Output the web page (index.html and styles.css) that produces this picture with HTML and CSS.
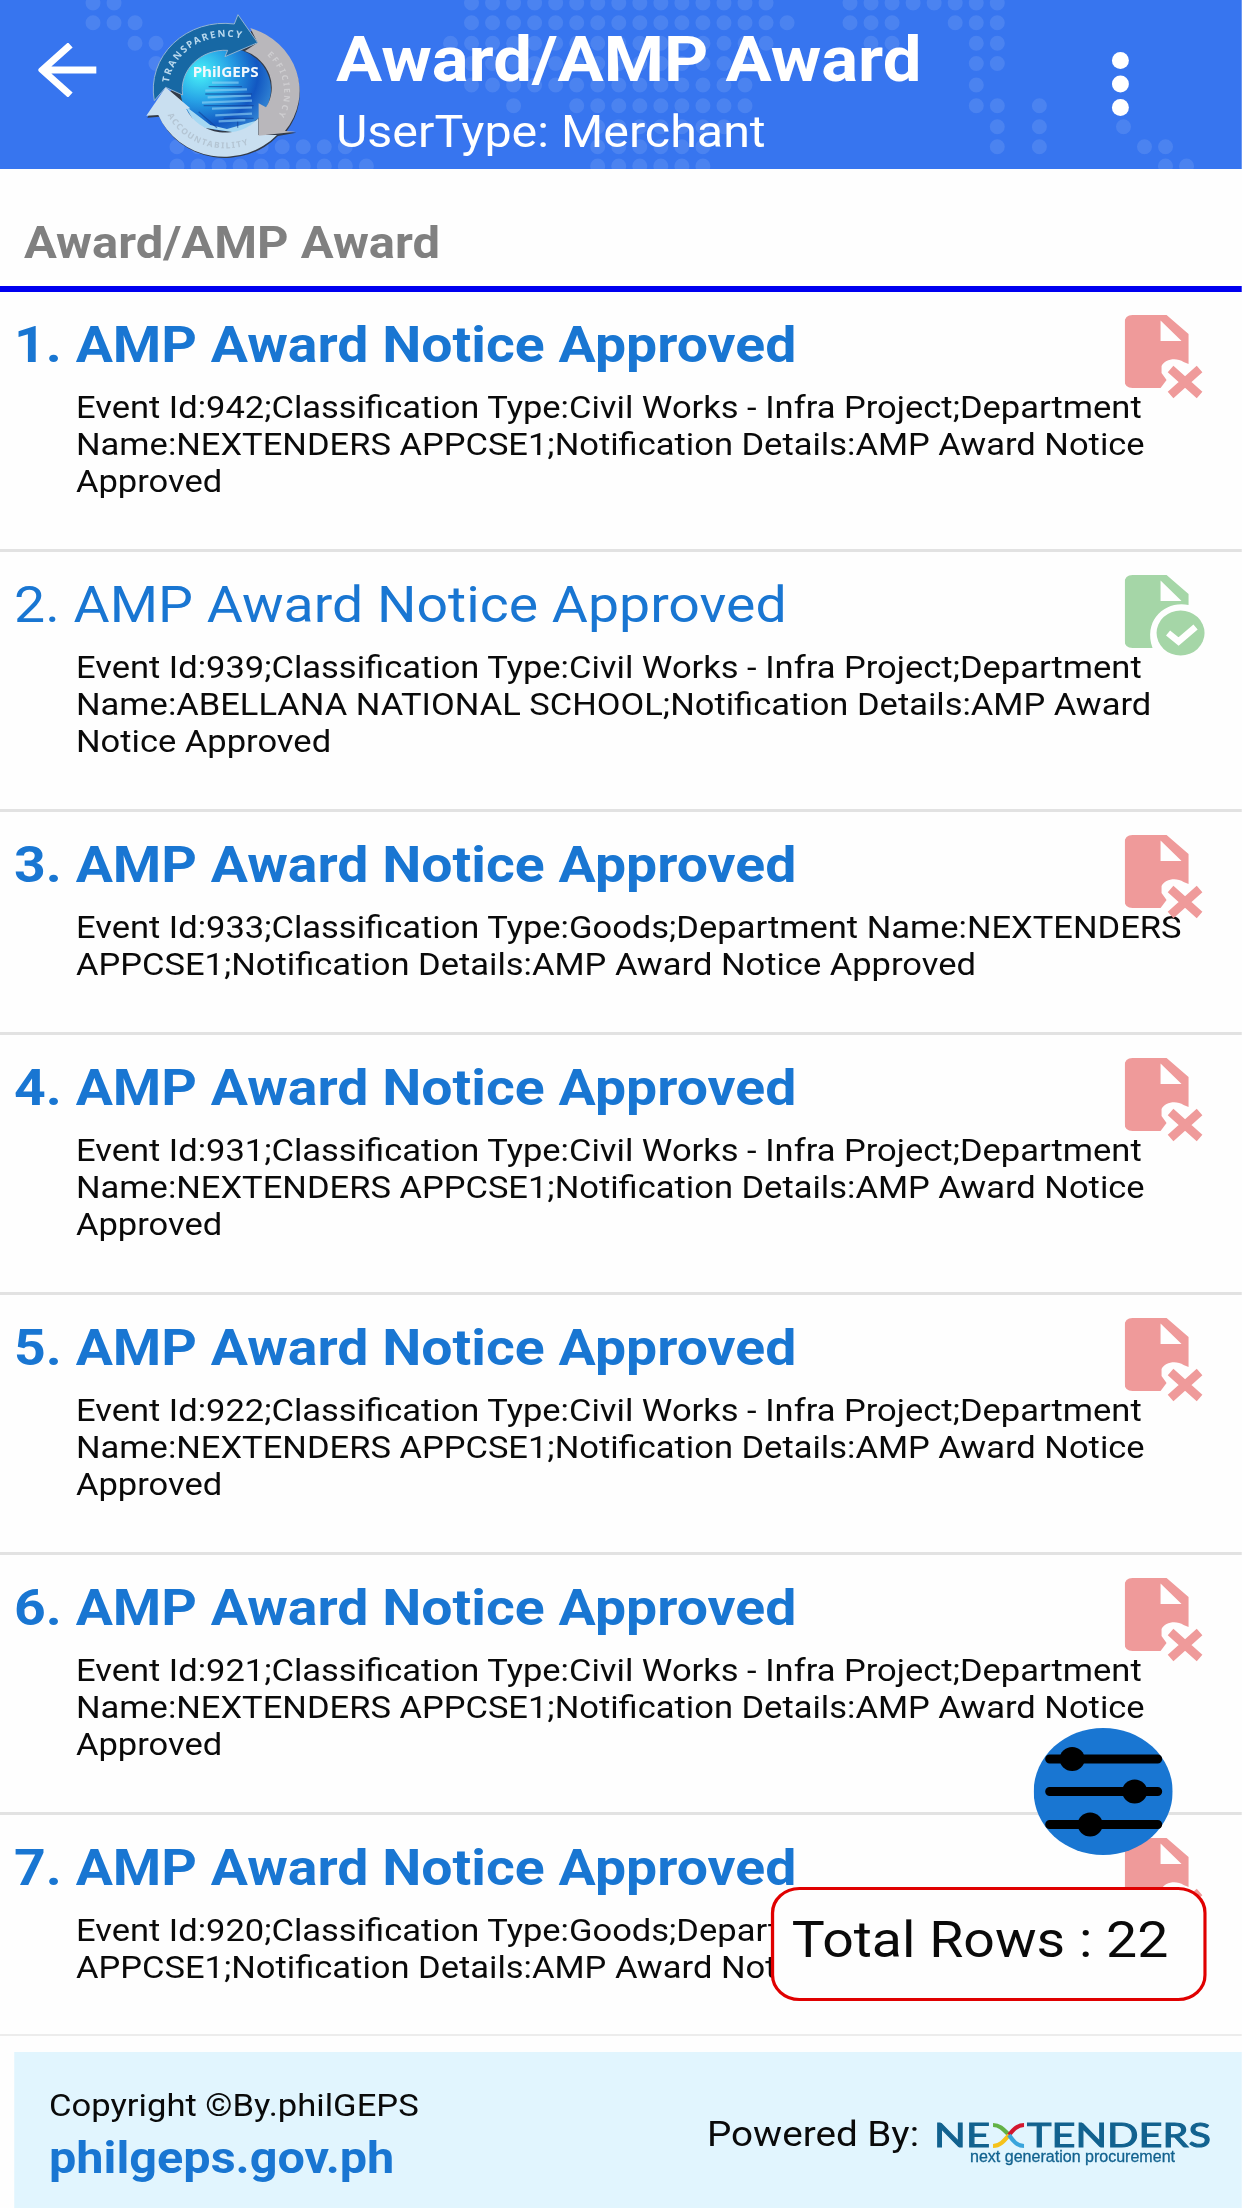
FILE: index.html
```html
<!DOCTYPE html>
<html lang="en">
<head>
<meta charset="utf-8">
<title>Award/AMP Award</title>
<link rel="stylesheet" href="styles.css">
</head>
<body>
<svg class="defs" aria-hidden="true">
  <symbol id="file-remove" viewBox="0 0 85 85" preserveAspectRatio="none">
    <path fill-rule="evenodd" fill="#ef9a9a" d="M8 1H42L64 20V50L59 48C52 43 40 45 37 52V59L42 66L36 74H8Q0 74 0 66V9Q0 1 8 1ZM36 6.500V27H57Z"/>
    <path stroke="#ef9a9a" stroke-width="8.500" d="M46 55L75 81M75 55L46 81"/>
  </symbol>
  <symbol id="file-check" viewBox="0 0 85 85" preserveAspectRatio="none">
    <path fill-rule="evenodd" fill="#a5d6a7" d="M8 1H42L64 20V31C42 26 18 45 28 74H8Q0 74 0 66V9Q0 1 8 1ZM36 6.500V27H57Z"/>
    <ellipse cx="56" cy="59" rx="24" ry="22.500" fill="#a5d6a7"/>
    <path fill="none" stroke="#fff" stroke-width="6.500" d="M43.500 59L54 67.500L71 53"/>
  </symbol>
</svg>
<div class="screen">
  <header class="topbar">
    <svg class="dots" viewBox="0 0 1242 169" preserveAspectRatio="none">
      <path d="M93 3h22M471.500 3h295M850 3h148M93 22.700h43M471.500 22.700h316M850 22.700h43M955.200 22.700h43M135 43.300h22M450.500 43.300h316M871 43.300h22M976.300 43.300h22M156 63.500h1M471.500 63.500h274M976.300 63.500h22M471.500 85h274M976.300 85h1M513.600 105.700h1M576.700 105.700h169M976.300 105.700h22M1039.400 105.700h1M597.700 126.700h127M997.300 126.700h1M1039.400 126.700h1M1123.500 126.700h1M177 146.700h170M597.700 146.700h106M997.300 146.700h1M1039.400 146.700h1M1144.500 146.700h22M177 166h191M597.700 166h106M1165.500 166h22"/>
    </svg>
    <svg class="back" viewBox="0 0 59 54" preserveAspectRatio="none"><path d="M58 27H5M32 2L4 27L32 52"/></svg>
    <svg class="seal" viewBox="0 0 570 507" preserveAspectRatio="none">
      <defs>
        <radialGradient id="globe" cx=".22" cy=".3" r=".85"><stop offset="0" stop-color="#48f2f8"/><stop offset=".4" stop-color="#27a2e6"/><stop offset=".75" stop-color="#1257c2"/><stop offset="1" stop-color="#3386d4"/></radialGradient>
        <path id="arc1" d="M116 248A174 156 0 0 1 360 124"/>
        <path id="arc2" d="M410 165A165 155 0 0 1 425 375"/>
        <path id="arc3" d="M112 345A190 172 0 0 0 380 422"/>
      </defs>
      <path fill="#333b48" d="M365 92A213 198 0 0 1 468 395L498 398L443 408A213 198 0 0 1 87 350L51 353L77 305Z"/>
      <ellipse cx="286" cy="268" rx="136" ry="125" fill="url(#globe)"/>
      <path d="M165 318L240 375L290 387L385 360L330 400L200 380Z" fill="#a5d8f3"/>
      <g fill="none" stroke="#93d4f5" stroke-width="7" opacity=".6">
        <path d="M245 248H325M225 272l125-4M232 292l130-6M215 308l150-6M245 326l120-4M255 346l110-5M265 364l80-4"/>
        <path stroke="#123f96" stroke-width="4" d="M235 260h100M225 282h140M220 317h150M205 335l55 48M280 355h90M322 365v18"/>
      </g>
      <text class="seal-name" x="187" y="230" textLength="198" lengthAdjust="spacingAndGlyphs">PhilGEPS</text>
      <path fill="#c9dff0" d="M106 262L180 325L168 327A128 118 0 0 0 384 355V405H440A213 198 0 0 1 84 345L48 347Z"/>
      <path fill="#b9b7bb" d="M360 84A213 198 0 0 1 464 393L495 395L385 407V310L407 322A128 118 0 0 0 344 153L382 128Z"/>
      <path fill="#1768a4" stroke="#93b5d2" stroke-width="3" d="M72 302A213 198 0 0 1 312 72L323 44L382 128L284 170L292 151A128 118 0 0 0 157 285L106 262Z"/>
      <text class="seal-ring"><textPath href="#arc1" textLength="285">TRANSPARENCY</textPath></text>
      <text class="seal-ring muted"><textPath href="#arc2" textLength="200">EFFICIENCY</textPath></text>
      <text class="seal-ring faint"><textPath href="#arc3" textLength="280">ACCOUNTABILITY</textPath></text>
    </svg>
    <div class="heading">
      <h1>Award/AMP Award</h1>
      <p>UserType: Merchant</p>
    </div>
    <svg class="more" viewBox="0 0 18 66" preserveAspectRatio="none"><circle cx="9" cy="9.500" r="8.500"/><circle cx="9" cy="33" r="8.500"/><circle cx="9" cy="56.500" r="8.500"/></svg>
  </header>

  <h2 class="section">Award/AMP Award</h2>

  <main class="list">
    <article class="row unread">
      <h3>1. AMP Award Notice Approved</h3>
      <p>Event Id:942;Classification Type:Civil Works - Infra Project;Department<br>Name:NEXTENDERS APPCSE1;Notification Details:AMP Award Notice<br>Approved</p>
      <svg class="status"><use href="#file-remove"/></svg>
    </article>
    <article class="row">
      <h3>2. AMP Award Notice Approved</h3>
      <p>Event Id:939;Classification Type:Civil Works - Infra Project;Department<br>Name:ABELLANA NATIONAL SCHOOL;Notification Details:AMP Award<br>Notice Approved</p>
      <svg class="status"><use href="#file-check"/></svg>
    </article>
    <article class="row unread">
      <h3>3. AMP Award Notice Approved</h3>
      <p>Event Id:933;Classification Type:Goods;Department Name:NEXTENDERS<br>APPCSE1;Notification Details:AMP Award Notice Approved</p>
      <svg class="status"><use href="#file-remove"/></svg>
    </article>
    <article class="row unread">
      <h3>4. AMP Award Notice Approved</h3>
      <p>Event Id:931;Classification Type:Civil Works - Infra Project;Department<br>Name:NEXTENDERS APPCSE1;Notification Details:AMP Award Notice<br>Approved</p>
      <svg class="status"><use href="#file-remove"/></svg>
    </article>
    <article class="row unread">
      <h3>5. AMP Award Notice Approved</h3>
      <p>Event Id:922;Classification Type:Civil Works - Infra Project;Department<br>Name:NEXTENDERS APPCSE1;Notification Details:AMP Award Notice<br>Approved</p>
      <svg class="status"><use href="#file-remove"/></svg>
    </article>
    <article class="row unread">
      <h3>6. AMP Award Notice Approved</h3>
      <p>Event Id:921;Classification Type:Civil Works - Infra Project;Department<br>Name:NEXTENDERS APPCSE1;Notification Details:AMP Award Notice<br>Approved</p>
      <svg class="status"><use href="#file-remove"/></svg>
    </article>
    <article class="row unread">
      <h3>7. AMP Award Notice Approved</h3>
      <p>Event Id:920;Classification Type:Goods;Department Name:NEXTENDERS<br>APPCSE1;Notification Details:AMP Award Notice Approved</p>
      <svg class="status"><use href="#file-remove"/></svg>
    </article>
  </main>

  <footer class="footer">
    <div class="copyright">
      <p>Copyright ©By.philGEPS</p>
      <a>philgeps.gov.ph</a>
    </div>
    <div class="powered">
      <span>Powered By:</span>
      <svg class="brand" viewBox="0 0 280 48" preserveAspectRatio="none">
        <text class="brand-name" x="0" y="26" textLength="56" lengthAdjust="spacingAndGlyphs">NE</text>
        <g fill="none" stroke-width="4.200">
          <path stroke="#62b246" d="M59 4C66 4 70 9 75 14"/>
          <path stroke="#d3172e" d="M90 4C83 4 79 9 75 14"/>
          <path stroke="#f5c21b" d="M59 25C66 25 70 20 75 14"/>
          <path stroke="#3aa5dc" d="M90 25C83 25 79 20 75 14"/>
        </g>
        <text class="brand-name" x="93" y="26" textLength="184" lengthAdjust="spacingAndGlyphs">TENDERS</text>
        <text class="brand-tag" x="36" y="41" textLength="205" lengthAdjust="spacingAndGlyphs">next generation procurement</text>
      </svg>
    </div>
  </footer>

  <svg class="filter" viewBox="0 0 139 127" preserveAspectRatio="none">
    <ellipse cx="69.500" cy="63.500" rx="69.500" ry="63.500" fill="#1976d2"/>
    <path stroke="#000" stroke-width="9" stroke-linecap="round" d="M16 31H124M16 63.500H124M16 96.500H124"/>
    <ellipse cx="38.500" cy="31" rx="12.500" ry="12"/>
    <ellipse cx="101" cy="63.500" rx="12.500" ry="12"/>
    <ellipse cx="56.500" cy="96.500" rx="12.500" ry="12"/>
  </svg>
  <div class="total">Total Rows : 22</div>
</div>
</body>
</html>
```
FILE: styles.css
```css
/* The screen is laid out on a narrower canvas and widened by --k. */
:root { --k: 1.095; }
* { box-sizing: border-box; }
html, body, h1, h2, h3, p { margin: 0; padding: 0; }
html, body { width: 1242px; height: 2208px; overflow: hidden; background: #fefefe; }
body { font-family: Roboto, "Liberation Sans", sans-serif; color: #0a0a0a; white-space: nowrap; }
svg { display: block; flex: none; }
.defs { position: absolute; width: 0; height: 0; }

.screen {
  position: relative;
  display: flex;
  flex-direction: column;
  width: calc(1242px / var(--k));
  height: 2208px;
  transform: scaleX(var(--k));
  transform-origin: 0 0;
}

.topbar {
  position: relative;
  display: flex;
  height: 169px;
  background: #3775ef;
  color: #fff;
}
.dots { position: absolute; left: 0; top: 0; width: 100%; height: 100%; }
.dots path {
  fill: none;
  stroke: rgba(255, 255, 255, .1);
  stroke-width: 15;
  stroke-linecap: round;
  stroke-dasharray: .01 21.030;
}
.back {
  position: relative;
  width: calc(59px / var(--k));
  height: 54px;
  margin: 43px 0 0 calc(38px / var(--k));
}
.back path { fill: none; stroke: #fff; stroke-width: 7; }
.seal {
  position: relative;
  width: calc(190px / var(--k));
  height: 169px;
  margin-left: calc(33px / var(--k));
}
.seal-name { font: bold 44px "Noto Sans", sans-serif; fill: #f3f8fc; }
.seal-ring { font: bold 29px "Noto Sans", sans-serif; fill: #b9d9ee; }
.seal-ring.muted { font-size: 25px; fill: #cfced1; }
.seal-ring.faint { font-size: 25px; fill: #b4c5d3; }
.heading { position: relative; flex: 1; margin-left: calc(16px / var(--k)); padding-top: 22px; }
.heading h1 { font-size: 62.900px; line-height: 76px; }
.heading p { margin-top: 8px; font-size: 44.200px; line-height: 52px; }
.more {
  position: relative;
  width: calc(18px / var(--k));
  height: 66px;
  margin: 51px calc(113px / var(--k)) 0 0;
  fill: #fff;
}

.section {
  height: 123px;
  padding: 48px 0 0 calc(24px / var(--k));
  border-bottom: 6px solid #0000f0;
  font-size: 44.700px;
  line-height: 52px;
  color: #808080;
}

.row {
  position: relative;
  padding: 23px 0 49px calc(76px / var(--k));
  border-bottom: 3px solid #e2e2e2;
}
.row h3 {
  margin-left: calc(-62px / var(--k));
  font-size: 50.600px;
  font-weight: 400;
  line-height: 60px;
  color: #1976d2;
}
.row.unread h3 { font-weight: 700; }
.row p { margin-top: 14px; font-size: 31.500px; line-height: 37px; }
.row:last-child { padding-bottom: 48px; border-bottom: 2px solid #ececec; }
.status {
  position: absolute;
  top: 22px;
  left: calc(1125px / var(--k));
  width: calc(85px / var(--k));
  height: 85px;
}

.footer {
  display: flex;
  flex: 1;
  justify-content: space-between;
  margin: 16px 0 0 calc(14px / var(--k));
  padding: 35px calc(28px / var(--k)) 0 calc(35px / var(--k));
  background: #e1f5fe;
}
.copyright p { font-size: 31.600px; line-height: 37px; }
.copyright a { display: block; margin-top: 8px; font-size: 44.400px; font-weight: 700; line-height: 52px; color: #1976d2; }
.powered { display: flex; padding-top: 26px; font-size: 35.300px; line-height: 42px; }
.brand { width: calc(280px / var(--k)); height: 48px; margin: 8px 0 0 calc(15px / var(--k)); overflow: visible; }
.brand-name { font: 400 32px Lato, sans-serif; fill: #12628f; stroke: #12628f; stroke-width: 1px; }
.brand-tag { font: 16px "Liberation Sans", sans-serif; fill: #12628f; stroke: #12628f; stroke-width: .3px; }

.filter {
  position: absolute;
  top: 1728px;
  left: calc(1033.500px / var(--k));
  width: calc(139px / var(--k));
  height: 127px;
}
.total {
  position: absolute;
  top: 1887px;
  left: calc(770.500px / var(--k));
  width: calc(436px / var(--k));
  height: 114px;
  padding: 20px 0 0 calc(18px / var(--k));
  border: 3px solid #e00000;
  border-radius: 26px;
  background: #fefefe;
  font-size: 50.600px;
  line-height: 60px;
}
```
